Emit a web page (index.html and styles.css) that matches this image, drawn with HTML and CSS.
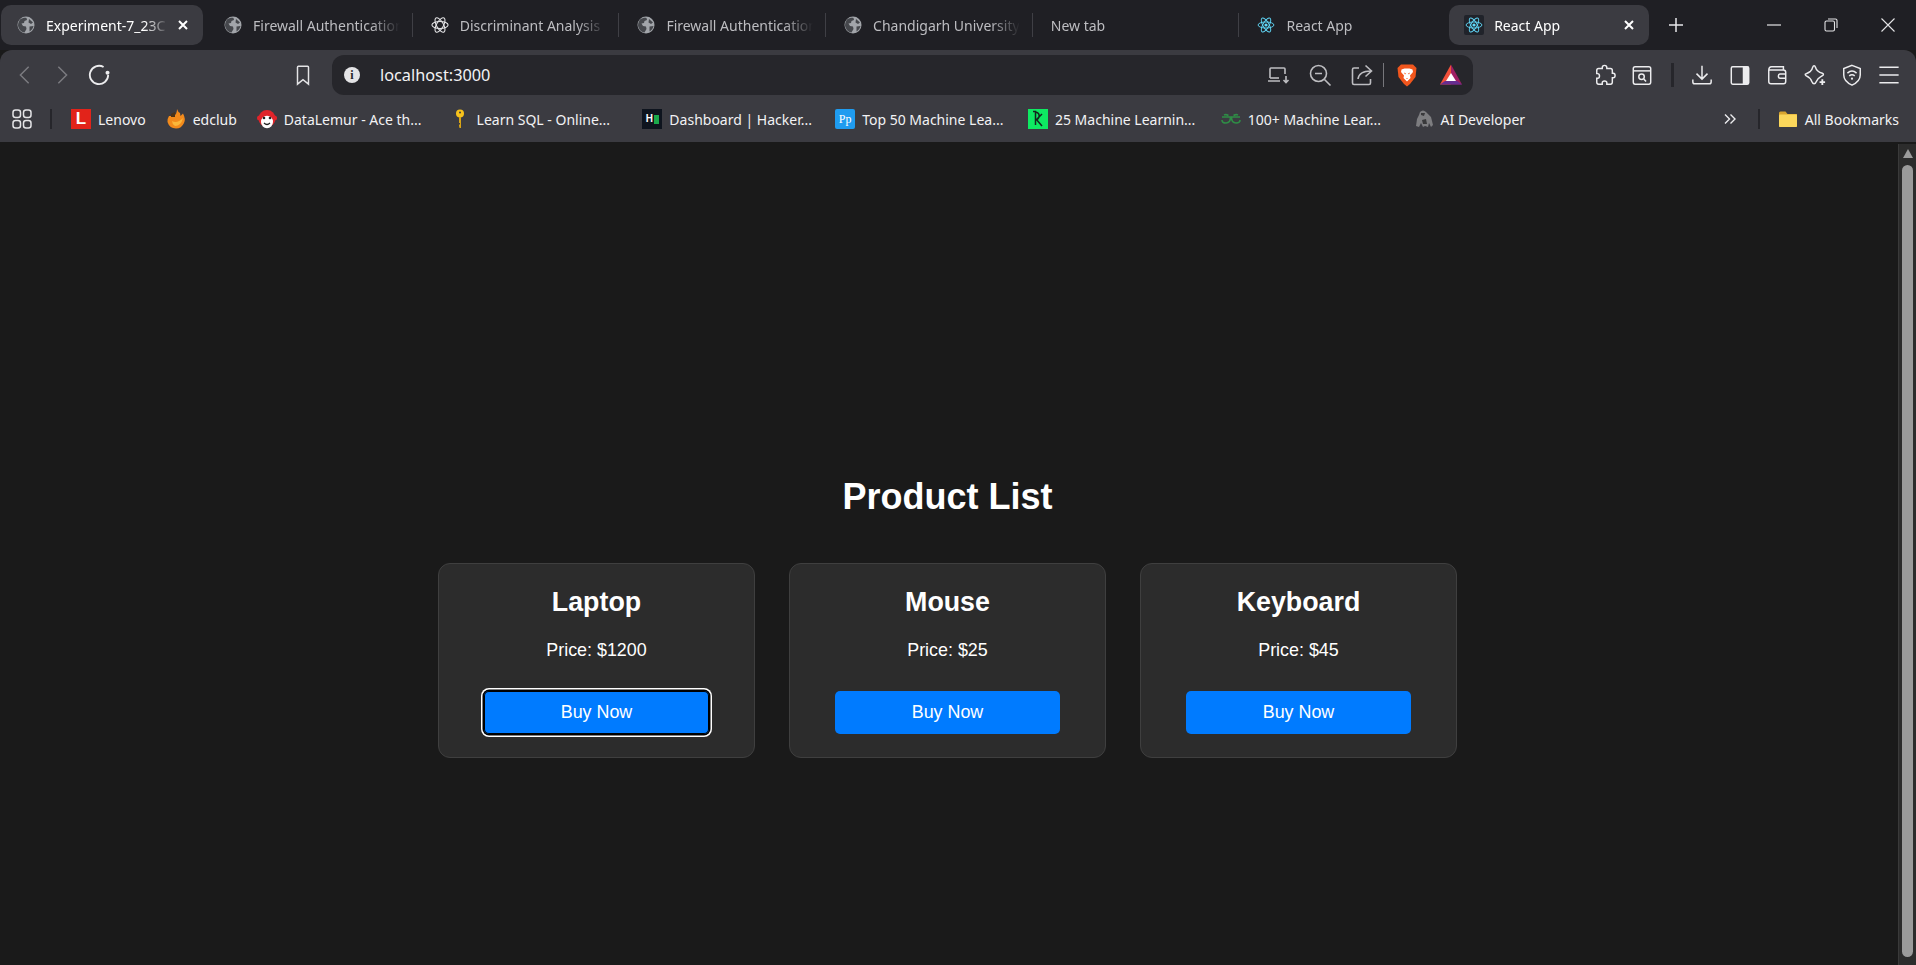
FILE: index.html
```html
<!DOCTYPE html>
<html lang="en">
<head>
    <meta charset="UTF-8">
    <meta name="viewport" content="width=device-width, initial-scale=1.0">
    <title>React App</title>
    <link rel="stylesheet" href="styles.css">
</head>
<body>
    <svg class="sprites" aria-hidden="true">
        <symbol id="globe" viewBox="0 0 18 18">
            <circle cx="9" cy="9" r="8.5" fill="#a2a5aa"/>
            <path d="M3 3.5 C5 2 8 1.5 9.5 2 L10 4 L7.5 5 L7 7 L4.5 7.5 L6 10 L9 10.5 L9.5 13 L7.5 16.5 C4 16 1.5 13 1 9.5 C1 7 2 5 3 3.5Z M12 3 L16 6.5 L14 8 L11.5 6.5Z M12.5 10.5 L16.5 10 C16 12.5 14.5 14.5 12.5 15.5Z" fill="#45474c"/>
        </symbol>
        <symbol id="react" viewBox="0 0 20 20">
            <g fill="none" stroke="#61dafb" stroke-width="1">
                <ellipse cx="10" cy="10" rx="8.8" ry="3.4"/>
                <ellipse cx="10" cy="10" rx="8.8" ry="3.4" transform="rotate(60 10 10)"/>
                <ellipse cx="10" cy="10" rx="8.8" ry="3.4" transform="rotate(120 10 10)"/>
            </g>
            <circle cx="10" cy="10" r="1.8" fill="#61dafb"/>
        </symbol>
        <symbol id="close-x" viewBox="0 0 12 12">
            <path d="M2 2 L10 10 M10 2 L2 10" fill="none" stroke="#fff" stroke-width="2"/>
        </symbol>
    </svg>

    <header class="tabstrip">
        <div class="tab active">
            <svg class="tab-icon"><use href="#globe"/></svg>
            <span class="tab-title">Experiment-7_23C</span>
            <svg class="tab-close"><use href="#close-x"/></svg>
        </div>
        <div class="tab">
            <svg class="tab-icon"><use href="#globe"/></svg>
            <span class="tab-title">Firewall Authentication</span>
        </div>
        <div class="tab">
            <svg class="tab-icon" viewBox="0 0 20 20">
                <g fill="none" stroke="#e4e4e6" stroke-width="1.2">
                    <ellipse cx="10" cy="10" rx="9" ry="3.8"/>
                    <ellipse cx="10" cy="10" rx="9" ry="3.8" transform="rotate(60 10 10)"/>
                    <ellipse cx="10" cy="10" rx="9" ry="3.8" transform="rotate(120 10 10)"/>
                </g>
            </svg>
            <span class="tab-title">Discriminant Analysis</span>
        </div>
        <div class="tab">
            <svg class="tab-icon"><use href="#globe"/></svg>
            <span class="tab-title">Firewall Authentication</span>
        </div>
        <div class="tab">
            <svg class="tab-icon"><use href="#globe"/></svg>
            <span class="tab-title">Chandigarh University</span>
        </div>
        <div class="tab">
            <span class="tab-title">New tab</span>
        </div>
        <div class="tab before-active">
            <svg class="tab-icon"><use href="#react"/></svg>
            <span class="tab-title">React App</span>
        </div>
        <div class="tab active">
            <span class="react-box"><svg class="tab-icon"><use href="#react"/></svg></span>
            <span class="tab-title">React App</span>
            <svg class="tab-close"><use href="#close-x"/></svg>
        </div>
        <svg class="new-tab" viewBox="0 0 14 14">
            <path d="M7 0 V14 M0 7 H14" fill="none" stroke="#e8e8ea" stroke-width="1.5"/>
        </svg>
        <div class="window-controls">
            <svg viewBox="0 0 14 14"><path d="M0 7 H14" stroke="#e4e4e6" stroke-width="1.2"/></svg>
            <svg viewBox="0 0 14 14" fill="none" stroke="#e4e4e6" stroke-width="1.1">
                <rect x="1" y="3" width="9.5" height="10" rx="1.5"/>
                <path d="M4 1 H11.5 Q13 1 13 2.5 V10"/>
            </svg>
            <svg viewBox="0 0 14 14"><path d="M0.5 0.5 L13.5 13.5 M13.5 0.5 L0.5 13.5" stroke="#e4e4e6" stroke-width="1.1"/></svg>
        </div>
    </header>

    <div class="toolbar">
        <div class="nav-row">
            <div class="nav-left">
                <button class="tool-btn">
                    <svg viewBox="0 0 24 24" fill="none" stroke="#7b7b80" stroke-width="1.6"><path d="M16 3 L7 12 L16 21"/></svg>
                </button>
                <button class="tool-btn">
                    <svg viewBox="0 0 24 24" fill="none" stroke="#7b7b80" stroke-width="1.6"><path d="M8 3 L17 12 L8 21"/></svg>
                </button>
                <button class="tool-btn">
                    <svg viewBox="0 0 24 24" fill="none" stroke="#ececee" stroke-width="2"><path d="M17 3.3 A10 10 0 1 0 22 12"/><circle cx="21.3" cy="9.5" r="2.2" fill="#ececee" stroke="none"/></svg>
                </button>
                <button class="tool-btn bookmark-btn">
                    <svg viewBox="0 0 24 24" fill="none" stroke="#e4e4e6" stroke-width="1.6"><path d="M6 3.5 Q6 2.5 7 2.5 H17 Q18 2.5 18 3.5 V22 L12 17 L6 22Z"/></svg>
                </button>
            </div>
            <div class="pill">
                <span class="info-dot">i</span>
                <span class="pill-url">localhost:3000</span>
                <div class="pill-icons">
                    <svg viewBox="0 0 24 24" fill="none" stroke="#bdbdc1" stroke-width="1.6"><path d="M4 15 V6 Q4 5 5 5 H18 Q19 5 19 6 V11 M2 18 H14 M20 13 V19 M17.5 17 L20 19.5 L22.5 17"/><path d="M4 15 H13"/></svg>
                    <svg viewBox="0 0 24 24" fill="none" stroke="#bdbdc1" stroke-width="1.6"><circle cx="10.5" cy="10.5" r="8"/><path d="M7 10.5 H14 M16.5 16.5 L22.5 22.5"/></svg>
                    <svg viewBox="0 0 24 24" fill="none" stroke="#bdbdc1" stroke-width="1.6"><path d="M9 5 H4 Q2.5 5 2.5 6.5 V20 Q2.5 21.5 4 21.5 H19 Q20.5 21.5 20.5 20 V16"/><path d="M8 16 Q9 8 21 8 M15.5 2.5 L21.5 8 L15.5 13.5"/></svg>
                    <span class="pill-sep"></span>
                    <svg class="brave" viewBox="0 0 24 24">
                        <path d="M6 1.5 H18 L21.5 5 L20.5 14 L15 21 L12 23.5 L9 21 L3.5 14 L2.5 5Z" fill="#f1561d"/>
                        <path d="M6.5 6.5 L9.5 5.5 H14.5 L17.5 6.5 L18 9 L15 12.5 L15.5 15 L12 18.5 L8.5 15 L9 12.5 L6 9Z" fill="#fff"/>
                        <path d="M9 9.5 L11 10.5 L10 11.5Z M15 9.5 L13 10.5 L14 11.5Z M11 15 H13 L12 16Z" fill="#f1561d"/>
                    </svg>
                    <svg class="bat" viewBox="0 0 24 24">
                        <path d="M12 1.5 L1 21.5 H12Z" fill="#f2503a"/>
                        <path d="M12 1.5 L23 21.5 H12Z" fill="#9e1f63"/>
                        <path d="M1 21.5 L6 18 H18 L23 21.5Z" fill="#662d91"/>
                        <path d="M12 10 L17 18 H7Z" fill="#fff"/>
                    </svg>
                </div>
            </div>
            <div class="nav-right">
                <button class="tool-btn">
                    <svg viewBox="0 0 24 24" fill="none" stroke="#ececee" stroke-width="1.6"><path d="M9 4 Q9 1.5 11.5 1.5 Q14 1.5 14 4 V5 H18 Q20 5 20 7 V10 H21 Q23 10 23 12.5 Q23 15 21 15 H20 V20 Q20 22 18 22 H14 V20.5 Q14 18.5 11.5 18.5 Q9 18.5 9 20.5 V22 H5 Q3 22 3 20 V15.5 H4 Q6 15.5 6 13 Q6 10.5 4 10.5 H3 V7 Q3 5 5 5 H9Z"/></svg>
                </button>
                <button class="tool-btn">
                    <svg viewBox="0 0 24 24" fill="none" stroke="#ececee" stroke-width="1.6"><rect x="2.5" y="3" width="19" height="19" rx="2"/><path d="M2.5 7.5 H21.5"/><circle cx="11.5" cy="14" r="3"/><path d="M14 16.5 L16.5 19"/></svg>
                </button>
                <span class="nav-sep"></span>
                <button class="tool-btn">
                    <svg viewBox="0 0 24 24" fill="none" stroke="#ececee" stroke-width="1.6"><path d="M12 2 V16 M6 10.5 L12 16.5 L18 10.5 M2 17 V19.5 Q2 21.5 4 21.5 H20 Q22 21.5 22 19.5 V17"/></svg>
                </button>
                <button class="tool-btn">
                    <svg viewBox="0 0 24 24"><rect x="2.5" y="3" width="19" height="19" rx="1.5" fill="none" stroke="#ececee" stroke-width="1.6"/><rect x="15" y="3" width="6.5" height="19" fill="#ececee"/></svg>
                </button>
                <button class="tool-btn">
                    <svg viewBox="0 0 24 24" fill="none" stroke="#ececee" stroke-width="1.6"><path d="M3 7 V19 Q3 21.5 5.5 21.5 H19 Q21.5 21.5 21.5 19 V9 Q21.5 6.5 19 6.5 H3.5 M3 7 Q3 3 6 3 H19 V6.5"/><path d="M21.5 11 H15.5 Q13.5 11 13.5 13 Q13.5 15.5 15.5 15.5 H21.5"/></svg>
                </button>
                <button class="tool-btn">
                    <svg viewBox="0 0 24 24" fill="none" stroke="#ececee" stroke-width="1.6"><path d="M11 2 Q12 2 12.5 3.5 Q14 8.5 20 10 Q21.5 10.5 21 12 Q20 13 18 14 Q15 15.5 13.5 19 Q12.5 21.5 11 21.5 Q9.5 21.5 8.5 19 Q7 15 2.5 13 Q1 12 1.5 11 Q5 9.5 7 8 Q9 6 9.5 3.5 Q10 2 11 2Z"/><path d="M20 16.5 V23 M17 19.8 H23" stroke-width="2"/></svg>
                </button>
                <button class="tool-btn">
                    <svg viewBox="0 0 24 24" fill="none" stroke="#ececee" stroke-width="1.6"><path d="M12 1.5 L21 5 V12 Q21 19 12 23 Q3 19 3 12 V5Z"/><path d="M7 10 Q12 5.5 17 10 M9 13 Q12 10.5 15 13"/><circle cx="12" cy="16" r="1.2" fill="#ececee" stroke="none"/></svg>
                </button>
                <button class="tool-btn">
                    <svg viewBox="0 0 24 24" fill="none" stroke="#ececee" stroke-width="1.6"><path d="M1.5 3.5 H22.5 M1.5 12 H22.5 M1.5 20.5 H22.5"/></svg>
                </button>
            </div>
        </div>

        <nav class="bookmarks">
            <svg class="apps-icon" viewBox="0 0 20 20" fill="none" stroke="#e4e4e6" stroke-width="1.5">
                <rect x="1" y="1" width="7.5" height="7.5" rx="2.5"/>
                <rect x="11.5" y="1" width="7.5" height="7.5" rx="2.5"/>
                <rect x="1" y="11.5" width="7.5" height="7.5" rx="2.5"/>
                <rect x="11.5" y="11.5" width="7.5" height="7.5" rx="2.5"/>
            </svg>
            <span class="bm-sep"></span>
            <a class="bm"><span class="fav fav-lenovo">L</span>Lenovo</a>
            <a class="bm">
                <svg class="fav" viewBox="0 0 20 20">
                    <path d="M11 0 Q12 3 14 4 L14.5 7 L17 4.5 Q20 10 18 14 Q15.5 19.5 10 19.5 Q3.5 19.5 1.5 13 Q1 10 3 7 L8 7 Q11 5 11 0Z" fill="#f28a1c"/>
                    <path d="M5 5 L9 3 L9 8 L5 8Z" fill="#4a3218"/>
                    <path d="M6 12 Q11 15 17 9 Q15 17 9 17 Q6 15 6 12Z" fill="#fbb73a"/>
                </svg>edclub
            </a>
            <a class="bm bm-long">
                <svg class="fav" viewBox="0 0 20 20">
                    <circle cx="2.5" cy="9" r="2.5" fill="#e0242a"/>
                    <circle cx="17.5" cy="9" r="2.5" fill="#e0242a"/>
                    <circle cx="10" cy="9.5" r="8.5" fill="#e0242a"/>
                    <ellipse cx="10" cy="13" rx="6" ry="6.2" fill="#fff"/>
                    <circle cx="7" cy="9" r="1.3" fill="#222"/>
                    <circle cx="13" cy="9" r="1.3" fill="#222"/>
                    <path d="M7 14 Q10 17 13 14" fill="none" stroke="#222" stroke-width="1.2"/>
                </svg>DataLemur - Ace th...
            </a>
            <a class="bm bm-long">
                <svg class="fav" viewBox="0 0 20 20">
                    <circle cx="10" cy="4.5" r="4" fill="#f6c21c"/>
                    <circle cx="10" cy="3.5" r="1" fill="#3b3b41"/>
                    <path d="M9 8 H11 V19 L9.5 19 L9 17 V15.5 H10 V14 H9Z" fill="#d9a516"/>
                </svg>Learn SQL - Online...
            </a>
            <a class="bm bm-long"><span class="fav fav-hacker">H<i class="hacker-block"></i></span>Dashboard | Hacker...</a>
            <a class="bm bm-long"><span class="fav fav-pp">Pp</span>Top 50 Machine Lea...</a>
            <a class="bm bm-long">
                <svg class="fav" viewBox="0 0 20 20">
                    <rect width="20" height="20" fill="#0eea62"/>
                    <path d="M5 2.5 H7.5 V16 M7.5 3 Q12 4 11 8 Q10 11 7.5 10.5 M8 10 L14 17 M14 5 L9 10" fill="none" stroke="#14261c" stroke-width="1.5"/>
                </svg>25 Machine Learnin...
            </a>
            <a class="bm bm-long">
                <svg class="fav" viewBox="0 0 20 20" fill="none" stroke="#2f8d46" stroke-width="1.6">
                    <path d="M1 8 H9.5 Q9.5 14 5 14 Q1 14 1 11 M3 6 Q5 5 7.5 6.5"/>
                    <path d="M19 8 H10.5 Q10.5 14 15 14 Q19 14 19 11 M17 6 Q15 5 12.5 6.5"/>
                </svg>100+ Machine Lear...
            </a>
            <a class="bm">
                <svg class="fav" viewBox="0 0 20 20">
                    <path d="M6 3 Q9 0 12 3 L17 8 L19 16 L17 18 L15 14 L14 18 L11 17 L9 18 L7 14 L5 18 L2 17 L3 10 L5 6Z" fill="#7d7d80"/>
                    <path d="M7 4 L11 4 L10 7 L7 6Z M8 11 L12 10 L13 15 L9 15Z" fill="#39393b"/>
                </svg>AI Developer
            </a>
            <div class="bm-right">
                <svg class="more-icon" viewBox="0 0 12 12" fill="none" stroke="#ececee" stroke-width="1.4"><path d="M1 1.5 L5.5 6 L1 10.5 M6.5 1.5 L11 6 L6.5 10.5"/></svg>
                <span class="bm-sep"></span>
                <a class="bm">
                    <svg class="fav" viewBox="0 0 20 20">
                        <path d="M1 4 Q1 2.5 2.5 2.5 H7.5 L9.5 5 H19 V17 Q19 18 18 18 H2 Q1 18 1 17Z" fill="#d9a52f"/>
                        <rect x="1" y="5.5" width="18" height="12.5" rx="1" fill="#fbd75b"/>
                    </svg>All Bookmarks
                </a>
            </div>
        </nav>
    </div>

    <div class="viewport">
        <main class="page">
            <h1>Product List</h1>
            <div class="product-list">
                <div class="product-card">
                    <h2>Laptop</h2>
                    <p>Price: $1200</p>
                    <button class="buy-btn focused">Buy Now</button>
                </div>
                <div class="product-card">
                    <h2>Mouse</h2>
                    <p>Price: $25</p>
                    <button class="buy-btn">Buy Now</button>
                </div>
                <div class="product-card">
                    <h2>Keyboard</h2>
                    <p>Price: $45</p>
                    <button class="buy-btn">Buy Now</button>
                </div>
            </div>
        </main>
        <div class="scrollbar">
            <span class="scroll-arrow"></span>
            <span class="scroll-thumb"></span>
        </div>
    </div>
</body>
</html>
```

FILE: styles.css
```css
* {
    box-sizing: border-box;
}

html, body {
    height: 100%;
}

body {
    margin: 0;
    display: flex;
    flex-direction: column;
    overflow: hidden;
    background-color: #1a1a1a;
    font-family: 'Noto Sans', 'Open Sans', sans-serif;
}

.sprites {
    display: none;
}

/* tab strip */
.tabstrip {
    display: flex;
    align-items: center;
    flex: 0 0 50px;
    background: #1f1f24;
}

.tab {
    position: relative;
    display: flex;
    align-items: center;
    flex: 0 0 206.7px;
    min-width: 0;
    height: 40px;
    padding: 0 13px 0 18px;
    color: #bdbdc1;
    font-size: 14px;
}

.tab::after {
    content: '';
    position: absolute;
    right: 0;
    top: 8px;
    bottom: 8px;
    width: 1px;
    background: #3f3f45;
}

.tab.active {
    flex: 0 0 200px;
    margin: 0 3px 0 3px;
    padding: 0 14px 0 16px;
    border-radius: 10px;
    background: #3b3b41;
    color: #fff;
}

.tab.active:first-child {
    flex-basis: 202px;
    margin: 0 3px 0 1px;
}

.tab.active::after,
.tab.before-active::after {
    display: none;
}

.tab-icon {
    flex: 0 0 18px;
    width: 18px;
    height: 18px;
    margin-right: 11px;
}

.react-box {
    display: flex;
    flex: 0 0 20px;
    width: 20px;
    height: 20px;
    margin: 0 10px 0 -1px;
    background: #20232a;
    border-radius: 2px;
    align-items: center;
    justify-content: center;
}

.react-box .tab-icon {
    margin: 0;
}

.tab-title {
    flex: 1;
    min-width: 0;
    overflow: hidden;
    white-space: nowrap;
    -webkit-mask-image: linear-gradient(to right, #000 80%, transparent 100%);
    mask-image: linear-gradient(to right, #000 80%, transparent 100%);
}

.tab-close {
    flex: 0 0 12px;
    width: 12px;
    height: 12px;
    margin-left: 8px;
}

.new-tab {
    flex: 0 0 14px;
    width: 14px;
    height: 14px;
    margin-left: 17px;
}

.window-controls {
    display: flex;
    align-items: center;
    gap: 43px;
    margin-left: auto;
    padding-right: 21px;
}

.window-controls svg {
    width: 14px;
    height: 14px;
}

/* toolbar and bookmarks */
.toolbar {
    flex: 0 0 92px;
    background: #3b3b41;
    border-radius: 12px 12px 0 0;
}

.nav-row {
    display: flex;
    align-items: center;
    height: 50px;
}

.nav-left {
    display: flex;
    align-items: center;
    flex: 0 0 332px;
    padding-left: 6px;
}

.tool-btn {
    display: flex;
    align-items: center;
    justify-content: center;
    width: 37.4px;
    height: 34px;
    padding: 0;
    border: none;
    background: none;
}

.tool-btn svg {
    width: 22px;
    height: 22px;
}

.bookmark-btn {
    margin-left: auto;
    margin-right: 10px;
}

.pill {
    display: flex;
    align-items: center;
    flex: 0 0 1141px;
    height: 40px;
    padding: 0 10px 0 12px;
    border-radius: 12px;
    background: #26262b;
}

.info-dot {
    width: 16px;
    height: 16px;
    border-radius: 50%;
    background: #e4e4e6;
    color: #26262b;
    font: bold 12px/16px 'Liberation Serif', serif;
    text-align: center;
}

.pill-url {
    margin-left: 20px;
    color: #f2f2f4;
    font-size: 16.3px;
}

.pill-icons {
    display: flex;
    align-items: center;
    gap: 18px;
    margin-left: auto;
}

.pill-icons svg {
    width: 24px;
    height: 24px;
}

.pill-sep {
    width: 1px;
    height: 24px;
    margin: 0 -7px 0 -9px;
    background: #77777c;
}

.pill-icons .brave {
    margin-right: 2px;
}

.nav-right {
    display: flex;
    align-items: center;
    margin-left: auto;
    padding-right: 8px;
}

.nav-sep {
    width: 3px;
    height: 24px;
    margin: 0 10px;
    background: #26262b;
}

.bookmarks {
    display: flex;
    align-items: center;
    gap: 20px;
    height: 38px;
    padding: 0 17px 0 12px;
}

.apps-icon {
    width: 20px;
    height: 20px;
    margin-right: -2px;
}

.bm-sep {
    width: 2px;
    height: 20px;
    margin-right: -1px;
    background: #26262b;
}

.bm {
    display: flex;
    align-items: center;
    gap: 7px;
    color: #f2f2f4;
    font-size: 14px;
    white-space: nowrap;
}

.bm-long {
    width: 172.8px;
}

.fav {
    flex: 0 0 20px;
    width: 20px;
    height: 20px;
    color: #fff;
    text-align: center;
}

.fav-lenovo {
    background: #e2231a;
    font: bold 17px/20px 'Liberation Sans', sans-serif;
}

.fav-hacker {
    display: flex;
    align-items: center;
    justify-content: center;
    gap: 1px;
    background: #0e141e;
    font: bold 10px/20px 'Liberation Sans', sans-serif;
}

.hacker-block {
    width: 5px;
    height: 9px;
    background: #1ba94c;
}

.fav-pp {
    background: #1f9cf0;
    border-radius: 2px;
    font: 12px/20px 'Liberation Serif', serif;
}

.bm-right {
    display: flex;
    align-items: center;
    gap: 19px;
    margin-left: auto;
}

.more-icon {
    width: 12px;
    height: 12px;
    margin-right: 3px;
}

/* page content */
.viewport {
    display: flex;
    flex: 1;
    min-height: 0;
    margin-top: 2px;
}

.page {
    flex: 1;
    padding: 332px 3px 0 0;
    color: #fff;
    font-family: 'Liberation Sans', Arial, sans-serif;
}

.page h1 {
    margin: 0 0 46px;
    font-size: 36px;
    line-height: 41px;
    text-align: center;
}

.product-list {
    display: flex;
    justify-content: center;
    gap: 34px;
}

.product-card {
    display: flex;
    flex-direction: column;
    align-items: center;
    width: 317px;
    height: 195px;
    padding: 23px 0 0;
    border: 1px solid #3f3f3f;
    border-radius: 12px;
    background: #2c2c2c;
}

.product-card h2 {
    margin: 0;
    font-size: 26.8px;
    line-height: 31px;
}

.product-card p {
    margin: 22px 0 31px;
    font-size: 17.9px;
    line-height: 20px;
}

.buy-btn {
    width: 225px;
    height: 43px;
    padding: 0;
    border: none;
    border-radius: 5px;
    background: #007bff;
    color: #fff;
    font-family: inherit;
    font-size: 17.9px;
}

.buy-btn.focused {
    box-shadow: inset 0 0 0 1px #000, 0 0 0 1.5px #000, 0 0 0 3px #fff;
}

.scrollbar {
    position: relative;
    flex: 0 0 18px;
    border-left: 1px solid #3a3a3a;
    background: #2c2c2c;
}

.scroll-arrow {
    position: absolute;
    top: 5px;
    left: 4px;
    border-left: 5.5px solid transparent;
    border-right: 5.5px solid transparent;
    border-bottom: 9px solid #9b9b9b;
}

.scroll-thumb {
    position: absolute;
    top: 21px;
    bottom: 8px;
    left: 3px;
    width: 11px;
    border-radius: 6px;
    background: #9b9b9b;
}
```
